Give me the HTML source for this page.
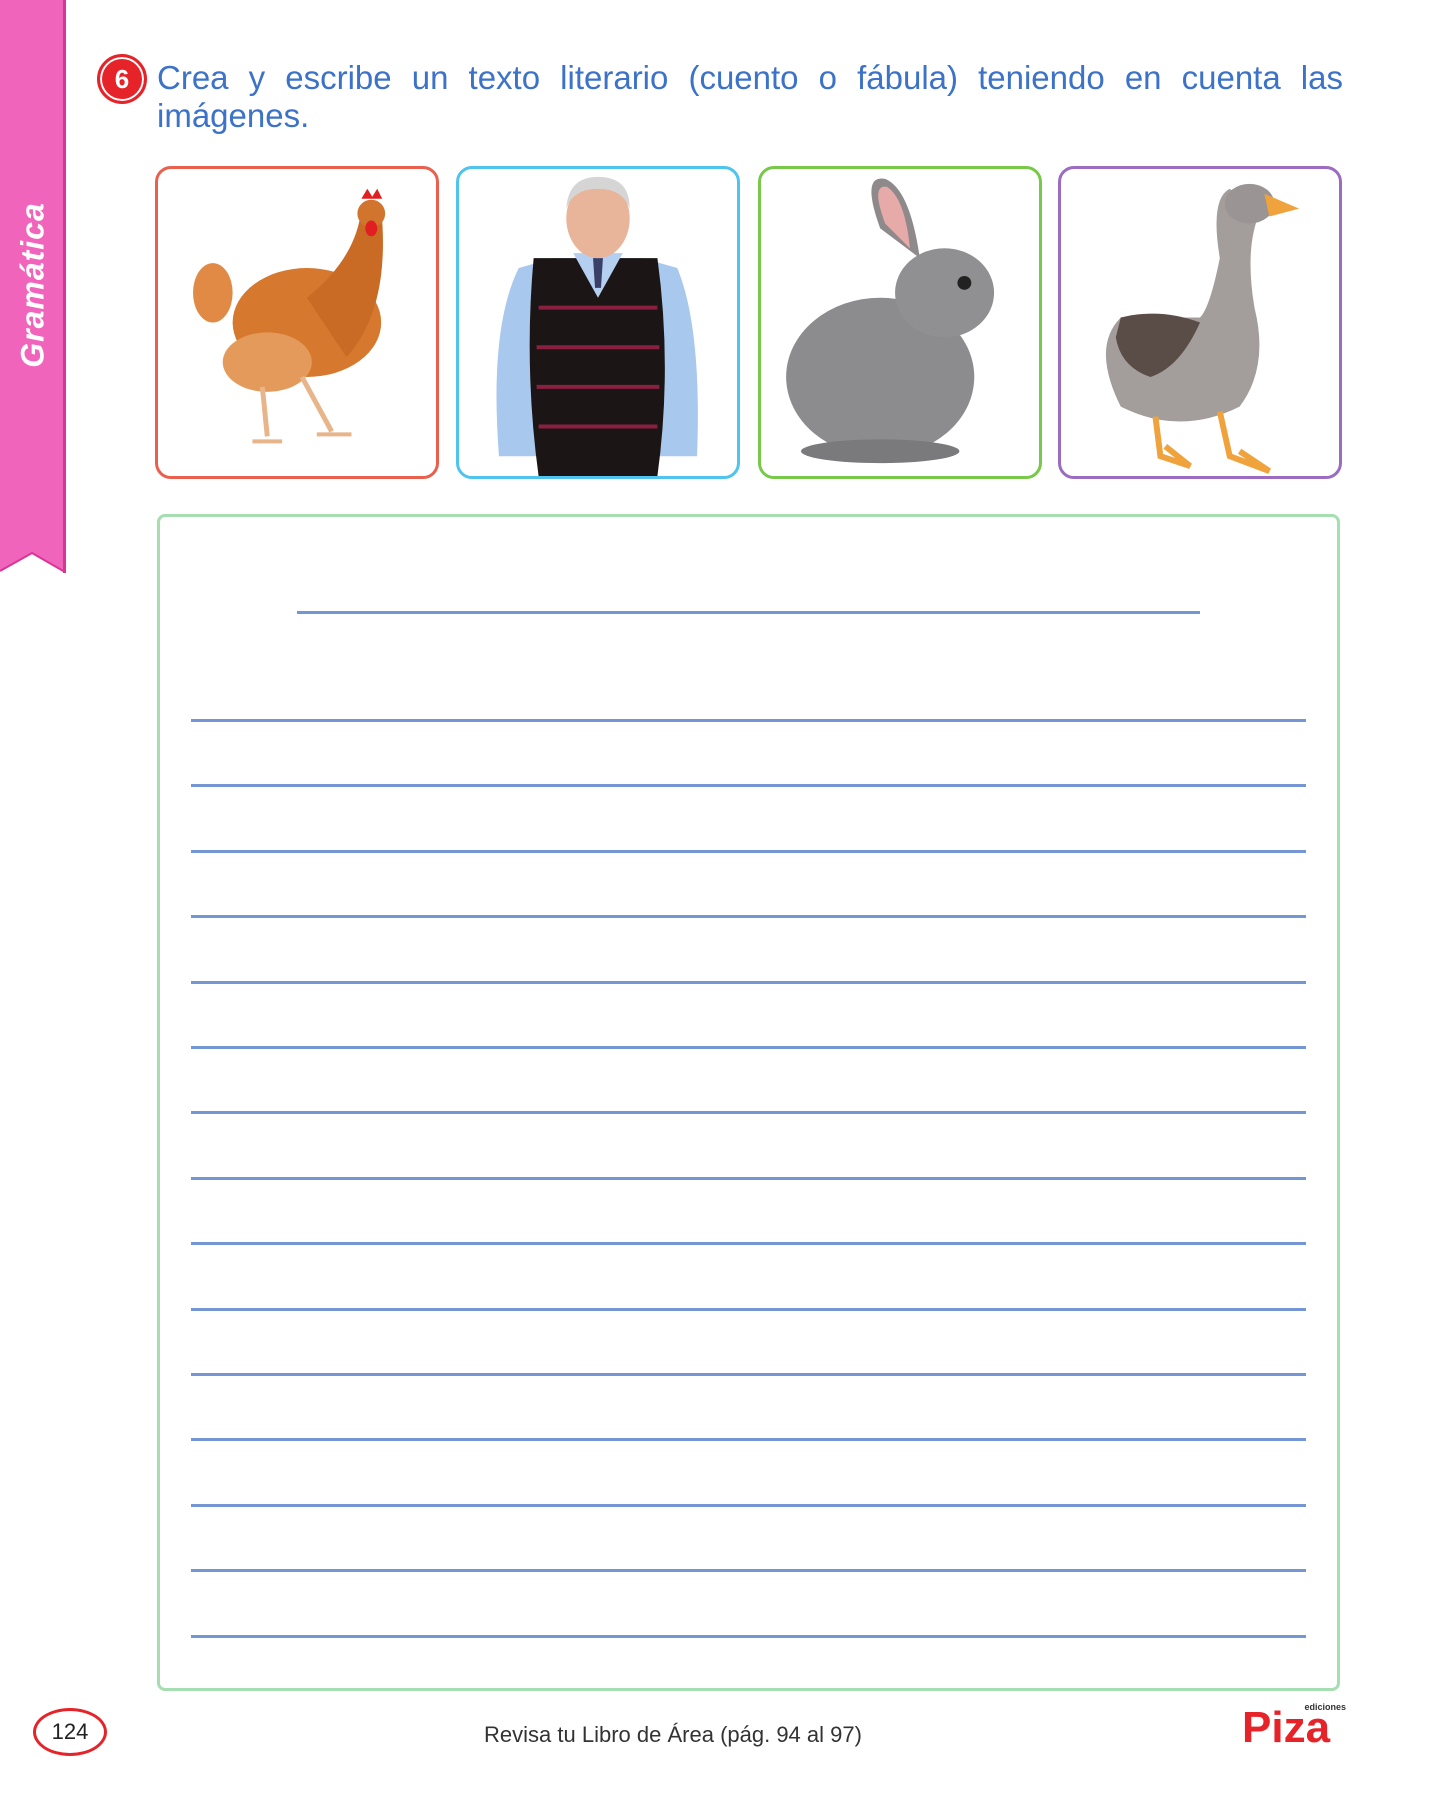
<!DOCTYPE html>
<html><head><meta charset="utf-8"><style>
html,body{margin:0;padding:0;background:#fff;}
body{width:1439px;height:1800px;position:relative;overflow:hidden;font-family:"Liberation Sans",sans-serif;}
.abs{position:absolute;}
.card{position:absolute;top:166px;width:278px;height:307px;border:3px solid;border-radius:16px;overflow:hidden;background:#fff;}
.line{position:absolute;left:191px;width:1115px;height:3px;background:#7496d4;}
</style></head><body>
<svg class="abs" style="left:0;top:0" width="70" height="580">
<polygon points="0,0 64,0 64,571 32,553 0,571" fill="#f064bb"/>
<rect x="63" y="0" width="3" height="573" fill="#d93596"/>
<polyline points="0,571 32,553 65,572" fill="none" stroke="#d93596" stroke-width="2"/>
</svg>
<div class="abs" style="left:33px;top:285px;transform:translate(-50%,-50%) rotate(-90deg);color:#fff;font-weight:bold;font-style:italic;font-size:32px;white-space:nowrap;letter-spacing:1px;">Gramática</div>
<div class="abs" style="left:97px;top:54px;width:44px;height:44px;border-radius:50%;background:#e52329;border:3px solid #e52329;box-shadow:inset 0 0 0 2px #fff;color:#fff;font-weight:bold;font-size:26px;text-align:center;line-height:44px;">6</div>
<div class="abs" style="left:157px;top:59px;width:1186px;color:#3c72c8;font-size:33px;line-height:38px;">
<div style="text-align:justify;text-align-last:justify;white-space:nowrap;">Crea y escribe un texto literario (cuento o fábula) teniendo en cuenta las</div>
<div style="white-space:normal;">imágenes.</div>
</div>

<div class="card" style="left:155px;border-color:#e9604e;">
<svg width="278" height="307" viewBox="0 0 280 310">
<ellipse cx="150" cy="155" rx="75" ry="55" fill="#d6792f"/>
<ellipse cx="55" cy="125" rx="20" ry="30" fill="#e08a45"/>
<path d="M150 130 Q200 90 205 40 L225 40 Q235 140 190 190 Z" fill="#c96a25"/>
<circle cx="215" cy="45" r="14" fill="#d0742e"/>
<path d="M205 30 l6 -10 l5 8 l5 -8 l5 10 z" fill="#e02020"/>
<ellipse cx="215" cy="60" rx="6" ry="8" fill="#e02020"/>
<ellipse cx="110" cy="195" rx="45" ry="30" fill="#e39a5a"/>
<path d="M105 220 L110 270 M145 210 L175 265" stroke="#e8b48a" stroke-width="5"/>
<path d="M95 275 l30 0 M160 268 l35 0" stroke="#e8b48a" stroke-width="4"/>
</svg></div>
<div class="card" style="left:456px;border-color:#4ec4ee;">
<svg width="278" height="307" viewBox="0 0 280 310">
<path d="M40 290 Q30 160 60 100 L95 90 L185 90 L220 100 Q245 160 240 290 Z" fill="#a9c8ee"/>
<path d="M75 90 L200 90 Q215 200 200 310 L80 310 Q65 200 75 90 Z" fill="#1b1516"/>
<path d="M80 140 h120 M78 180 h124 M78 220 h124 M80 260 h120" stroke="#8a1f40" stroke-width="4"/>
<path d="M115 85 L140 130 L165 85 Z" fill="#b5cff0"/>
<path d="M135 90 h10 l-2 30 h-6 z" fill="#3a3f6a"/>
<ellipse cx="140" cy="50" rx="32" ry="40" fill="#e8b59a"/>
<path d="M108 40 Q110 8 140 8 Q172 8 172 40 Q165 20 140 20 Q115 20 108 40Z" fill="#d5d5d5"/>
</svg></div>
<div class="card" style="left:758px;border-color:#78c84a;">
<svg width="278" height="307" viewBox="0 0 280 310">
<ellipse cx="120" cy="210" rx="95" ry="80" fill="#8c8b8e"/>
<ellipse cx="185" cy="125" rx="50" ry="45" fill="#909093"/>
<path d="M120 60 Q100 5 125 10 Q150 20 160 90 Z" fill="#8e8a8c"/>
<path d="M125 55 Q110 15 127 18 Q145 30 150 80 Z" fill="#e6aaa8"/>
<circle cx="205" cy="115" r="7" fill="#222"/>
<ellipse cx="120" cy="285" rx="80" ry="12" fill="#7a797c"/>
</svg></div>
<div class="card" style="left:1058px;border-color:#9b6cc0;">
<svg width="278" height="307" viewBox="0 0 280 310">
<path d="M170 20 Q150 30 160 90 Q150 140 140 150 L60 150 Q30 180 60 240 Q120 270 180 240 Q210 200 195 140 Q185 80 200 45 Z" fill="#a39d9c"/>
<ellipse cx="190" cy="35" rx="25" ry="20" fill="#9a9494"/>
<path d="M205 25 L240 40 L210 48 Z" fill="#f0a23c"/>
<path d="M60 150 Q100 140 140 155 Q120 200 90 210 Q60 200 55 170Z" fill="#5a4c46"/>
<path d="M95 250 L100 290 L130 300 L105 280 M160 245 L170 290 L210 305 L180 285" stroke="#f0a23c" stroke-width="6" fill="none"/>
</svg></div>

<div class="abs" style="left:157px;top:514px;width:1177px;height:1171px;border:3px solid #a5deb0;border-radius:8px;"></div>
<div class="abs" style="left:297px;top:611px;width:903px;height:3px;background:#7496d4;"></div>
<div class="line" style="top:719px"></div><div class="line" style="top:784px"></div>
<div class="line" style="top:850px"></div><div class="line" style="top:915px"></div>
<div class="line" style="top:981px"></div><div class="line" style="top:1046px"></div>
<div class="line" style="top:1111px"></div><div class="line" style="top:1177px"></div>
<div class="line" style="top:1242px"></div><div class="line" style="top:1308px"></div>
<div class="line" style="top:1373px"></div><div class="line" style="top:1438px"></div>
<div class="line" style="top:1504px"></div><div class="line" style="top:1569px"></div>
<div class="line" style="top:1635px"></div>

<div class="abs" style="left:33px;top:1708px;width:68px;height:42px;border:3px solid #e52329;border-radius:50%;text-align:center;line-height:42px;font-size:22px;color:#222;">124</div>
<div class="abs" style="left:413px;top:1722px;width:520px;text-align:center;font-size:22px;color:#333;">Revisa tu Libro de Área (pág. 94 al 97)</div>
<div class="abs" style="left:1242px;top:1702px;width:104px;height:46px;">
<div class="abs" style="right:0;top:0;font-size:9px;font-weight:bold;color:#333;">ediciones</div>
<div class="abs" style="left:0;top:6px;font-size:44px;font-weight:bold;color:#e52329;letter-spacing:0px;line-height:40px;">Piza</div>
</div>
</body></html>
